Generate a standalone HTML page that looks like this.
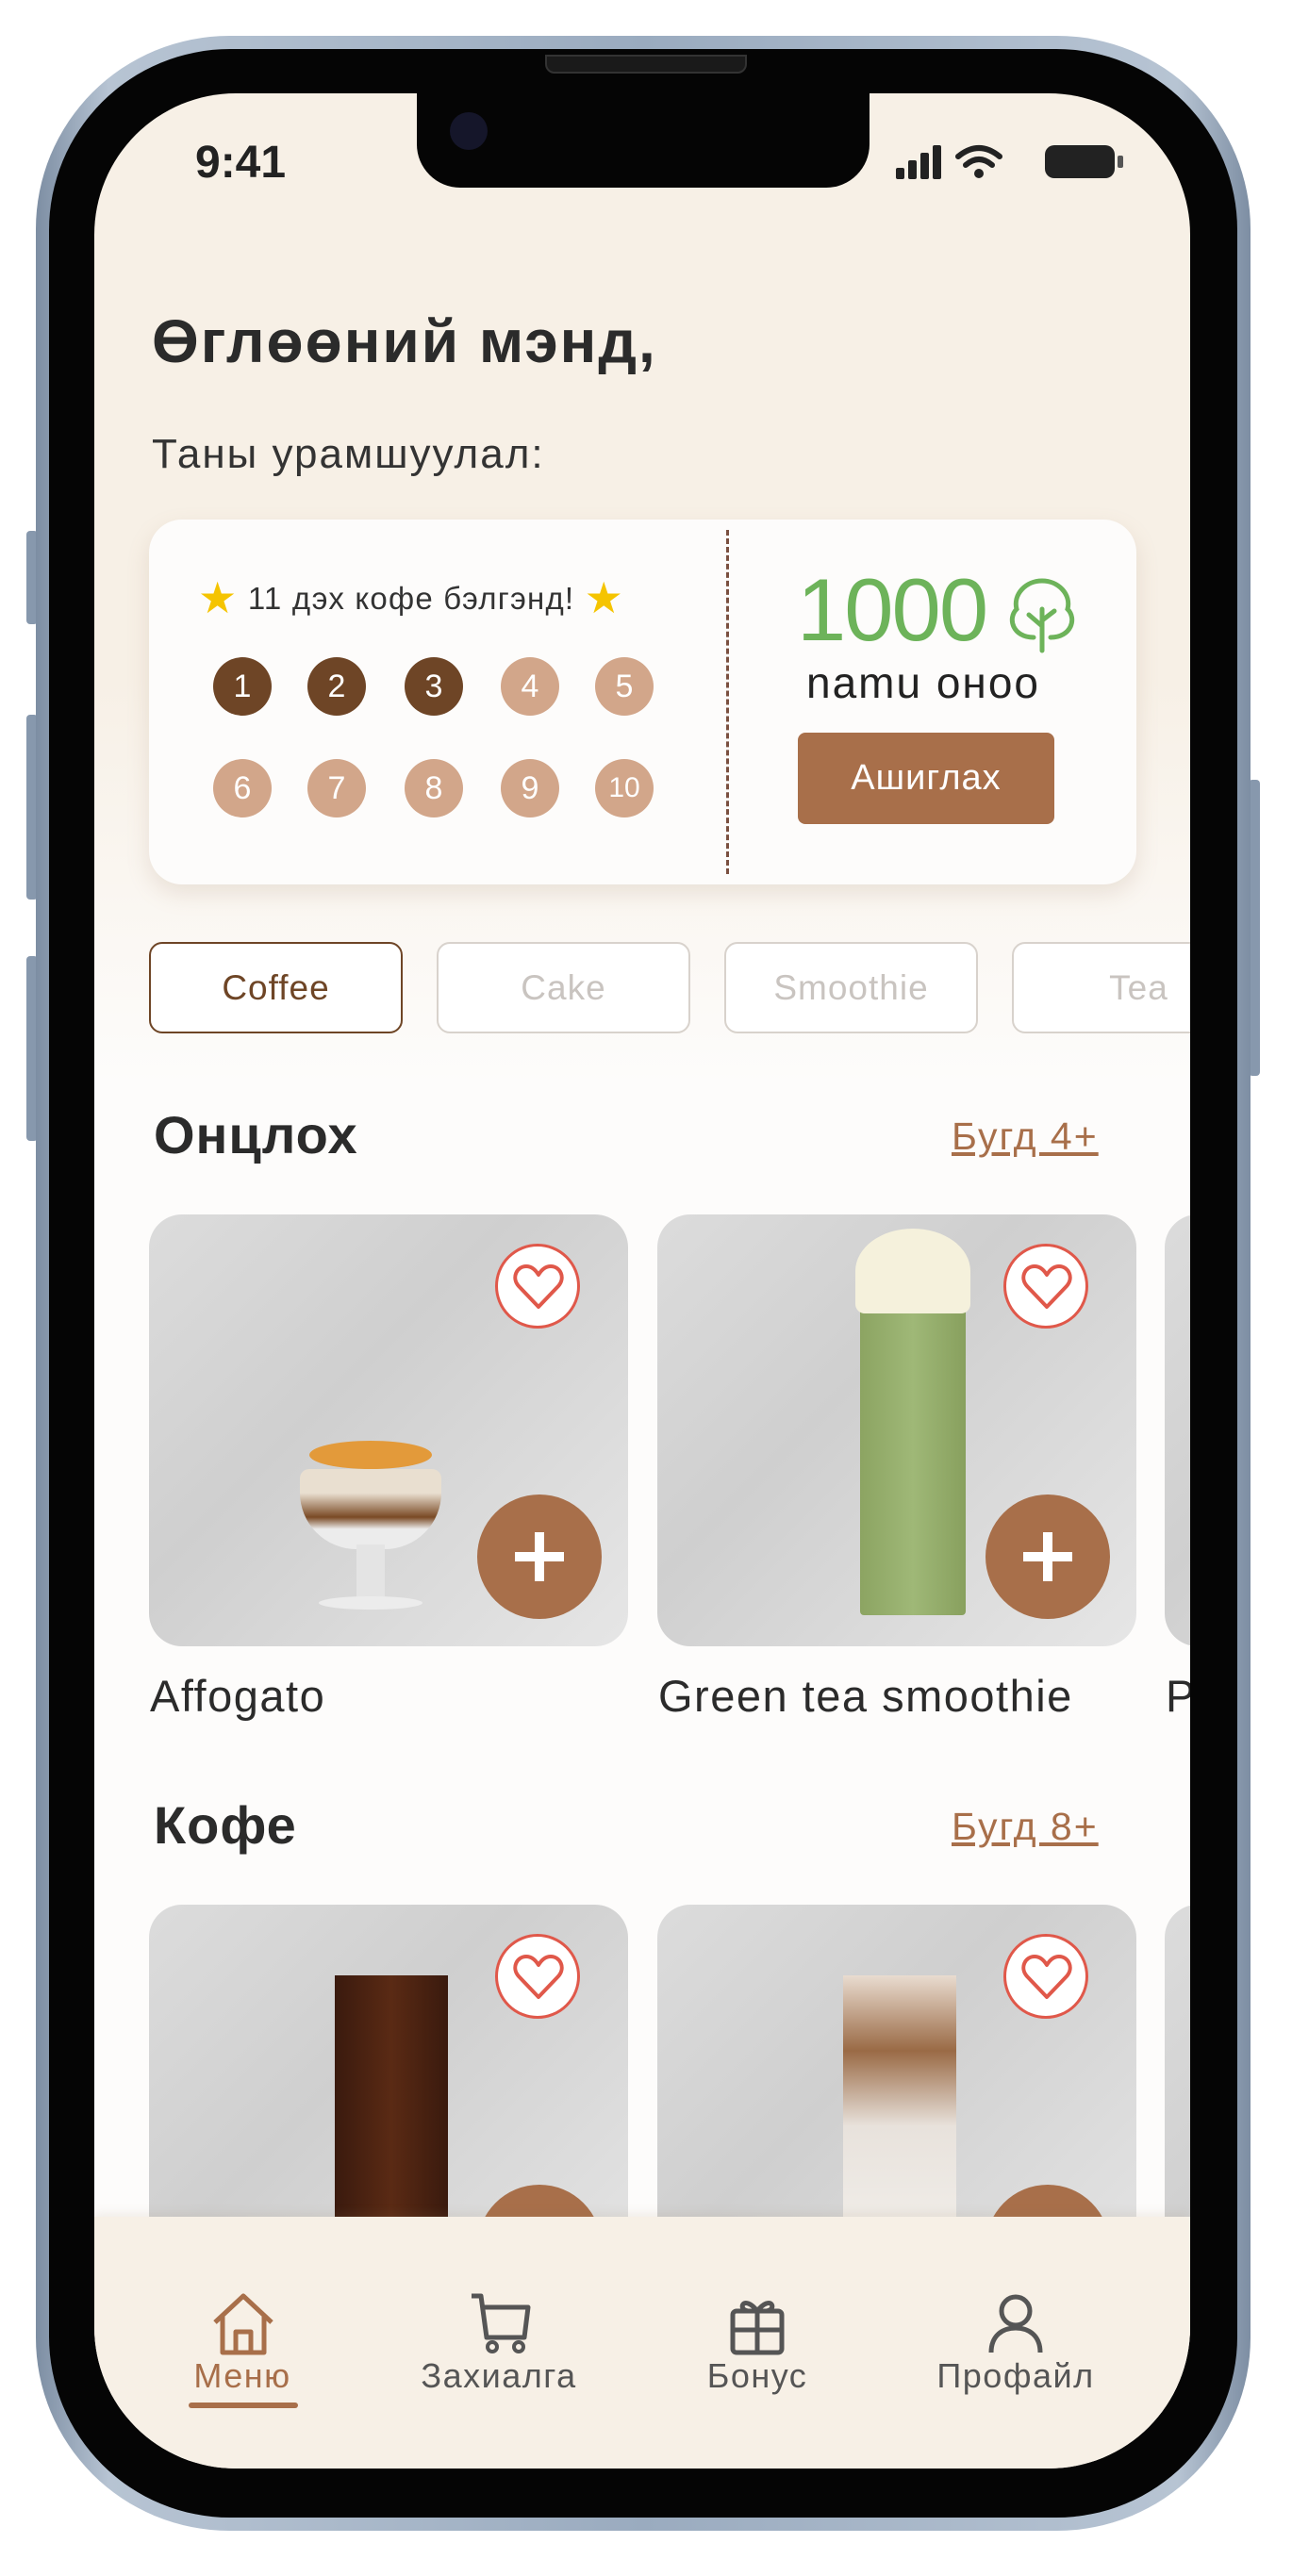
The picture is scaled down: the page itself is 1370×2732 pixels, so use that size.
<!DOCTYPE html>
<html><head><meta charset="utf-8">
<style>
*{margin:0;padding:0;box-sizing:border-box}
body{width:1370px;height:2732px;background:#fff;position:relative;overflow:hidden;font-family:"Liberation Sans","DejaVu Sans",sans-serif;color:#2a2a2a}
.a{position:absolute}
.frame{left:38px;top:38px;width:1288px;height:2646px;border-radius:205px;background:linear-gradient(90deg,#7d8ea3,#b7c4d3 6%,#9aabbf 50%,#b7c4d3 94%,#7d8ea3);}
.bezel{left:52px;top:52px;width:1260px;height:2618px;border-radius:192px;background:#050505}
.screen{left:100px;top:99px;width:1162px;height:2519px;border-radius:150px;overflow:hidden;background:linear-gradient(180deg,#f7f0e6 0,#f7f0e6 620px,#fdfcfb 1050px,#fdfcfb 100%)}
.btn{background:#8798ad;border-radius:4px}
.circ{width:62px;height:62px;border-radius:50%;color:#fff;font-size:34px;line-height:62px;text-align:center}
.d{background:#6e4526}.l{background:#d2a68a}
.tab{top:900px;height:97px;width:269px;border:2px solid #d8d2cc;border-radius:14px;background:#fff;text-align:center;line-height:93px;font-size:37px;color:#c9c4c0;letter-spacing:1px}
.card{width:508px;height:458px;border-radius:35px;background:linear-gradient(135deg,#dcdcdc,#cfcfcf 40%,#e6e6e6);overflow:hidden}
.heart{width:90px;height:90px;border-radius:50%;background:#fff;border:3px solid #e0584a}
.heart svg{position:absolute;left:16px;top:18px}
.plus{width:132px;height:132px;border-radius:50%;background:#a86f4a}
.plus:before,.plus:after{content:"";position:absolute;background:#fff;left:50%;top:50%;transform:translate(-50%,-50%)}
.plus:before{width:52px;height:10px}.plus:after{width:10px;height:52px}
.nav{font-size:36px;color:#555;text-align:center;width:260px;letter-spacing:1.5px}
.pname{font-size:47px;color:#2b2b2b;letter-spacing:1.5px;white-space:nowrap}
</style></head><body>
<div class="a btn" style="left:28px;top:563px;width:12px;height:99px"></div>
<div class="a btn" style="left:28px;top:758px;width:12px;height:196px"></div>
<div class="a btn" style="left:28px;top:1014px;width:12px;height:196px"></div>
<div class="a btn" style="left:1324px;top:827px;width:12px;height:314px"></div>
<div class="a frame"></div>
<div class="a bezel"></div>
<div class="a screen">
  <div class="a" style="left:342px;top:-10px;width:480px;height:110px;background:#050505;border-radius:0 0 46px 46px"></div>
  <div class="a" style="left:377px;top:20px;width:40px;height:40px;border-radius:50%;background:#15162a"></div>
  <div class="a" style="left:107px;top:46px;font-size:48px;font-weight:bold;color:#222">9:41</div>
  <svg class="a" style="left:850px;top:52px" width="250" height="42" viewBox="0 0 250 42">
    <rect x="0" y="27" width="9" height="12" rx="2" fill="#222"/><rect x="13" y="19" width="9" height="20" rx="2" fill="#222"/><rect x="26" y="11" width="9" height="28" rx="2" fill="#222"/><rect x="39" y="3" width="9" height="36" rx="2" fill="#222"/>
    <path d="M66 15 Q88 -3 110 15" stroke="#222" stroke-width="6" fill="none" stroke-linecap="round"/><path d="M74 24 Q88 12 102 24" stroke="#222" stroke-width="6" fill="none" stroke-linecap="round"/><circle cx="88" cy="33" r="5" fill="#222"/>
    <rect x="158" y="3" width="74" height="35" rx="10" fill="#222"/><rect x="235" y="14" width="6" height="13" rx="2" fill="#555"/>
  </svg>
  <div class="a" style="left:61px;top:226px;font-size:64px;font-weight:bold;color:#2b2b2b;letter-spacing:2px;white-space:nowrap">Өглөөний мэнд,</div>
  <div class="a" style="left:61px;top:358px;font-size:44px;color:#333;letter-spacing:2px;white-space:nowrap">Таны урамшуулал:</div>
  <div class="a" style="left:58px;top:452px;width:1047px;height:387px;background:#fdfcfb;border-radius:35px;box-shadow:0 10px 24px rgba(160,130,100,.18)"></div>
  <div class="a" style="left:670px;top:463px;height:365px;border-left:3px dashed #7a5040"></div>
  <div class="a" style="left:110px;top:508px;font-size:33px;color:#333;white-space:nowrap;letter-spacing:1.2px"><span style="color:#f5c400;font-size:46px;vertical-align:-4px">★</span> 11 дэх кофе бэлгэнд! <span style="color:#f5c400;font-size:46px;vertical-align:-4px">★</span></div>
  <div class="a circ d" style="left:126px;top:598px">1</div>
  <div class="a circ d" style="left:226px;top:598px">2</div>
  <div class="a circ d" style="left:329px;top:598px">3</div>
  <div class="a circ l" style="left:431px;top:598px">4</div>
  <div class="a circ l" style="left:531px;top:598px">5</div>
  <div class="a circ l" style="left:126px;top:706px">6</div>
  <div class="a circ l" style="left:226px;top:706px">7</div>
  <div class="a circ l" style="left:329px;top:706px">8</div>
  <div class="a circ l" style="left:431px;top:706px">9</div>
  <div class="a circ l" style="left:531px;top:706px;font-size:30px">10</div>
  <div class="a" style="left:745px;top:494px;font-size:94px;color:#6db35a;letter-spacing:-2px">1000</div>
  <svg class="a" style="left:966px;top:513px" width="78" height="82" viewBox="0 0 78 82"><path d="M39 78 V34 M39 52 L25 40 M39 46 L52 36 M30 64 C8 64 2 44 12 34 C8 18 22 4 39 4 C56 4 70 18 66 34 C76 44 70 64 48 64" stroke="#6db35a" stroke-width="5" fill="none" stroke-linecap="round"/></svg>
  <div class="a" style="left:755px;top:598px;font-size:46px;color:#222;letter-spacing:2px;white-space:nowrap">namu оноо</div>
  <div class="a" style="left:746px;top:678px;width:272px;height:97px;background:#a86f4a;border-radius:8px;color:#fff;font-size:38px;text-align:center;line-height:97px;letter-spacing:1px">Ашиглах</div>
  <div class="a tab" style="left:58px;border-color:#6e4526;color:#6e4526">Coffee</div>
  <div class="a tab" style="left:363px">Cake</div>
  <div class="a tab" style="left:668px">Smoothie</div>
  <div class="a tab" style="left:973px">Tea</div>
  <div class="a" style="left:63px;top:1072px;font-size:56px;font-weight:bold;color:#2b2b2b;letter-spacing:1px">Онцлох</div>
  <div class="a" style="left:909px;top:1083px;font-size:41px;color:#a86f4a;text-decoration:underline;letter-spacing:2px">Бугд 4+</div>
  <div class="a card" style="left:58px;top:1189px">
    <div class="a" style="left:170px;top:240px;width:130px;height:30px;border-radius:50%;background:#e39a3a"></div>
    <div class="a" style="left:160px;top:270px;width:150px;height:85px;border-radius:10px 10px 60px 60px;background:linear-gradient(#e9dfd0 30%,#7a4a25 60%,#ececec 75%)"></div>
    <div class="a" style="left:220px;top:350px;width:30px;height:60px;background:#e4e4e4"></div>
    <div class="a" style="left:180px;top:405px;width:110px;height:14px;border-radius:50%;background:#ececec"></div>
    <div class="a heart" style="left:367px;top:31px"><svg width="54" height="50" viewBox="0 0 54 50"><path d="M27 46 L6 24 C-2 15 4 3 14 3 C20 3 24 7 27 12 C30 7 34 3 40 3 C50 3 56 15 48 24 Z" stroke="#e0584a" stroke-width="4" fill="none" stroke-linejoin="round"/></svg></div>
    <div class="a plus" style="left:348px;top:297px"></div>
  </div>
  <div class="a card" style="left:597px;top:1189px">
    <div class="a" style="left:215px;top:90px;width:112px;height:335px;background:linear-gradient(90deg,#8ca462,#9fb877,#88a05e);border-radius:4px"></div>
    <div class="a" style="left:210px;top:15px;width:122px;height:90px;border-radius:50% 50% 10px 10px;background:#f5f1dc"></div>
    <div class="a heart" style="left:367px;top:31px"><svg width="54" height="50" viewBox="0 0 54 50"><path d="M27 46 L6 24 C-2 15 4 3 14 3 C20 3 24 7 27 12 C30 7 34 3 40 3 C50 3 56 15 48 24 Z" stroke="#e0584a" stroke-width="4" fill="none" stroke-linejoin="round"/></svg></div>
    <div class="a plus" style="left:348px;top:297px"></div>
  </div>
  <div class="a card" style="left:1135px;top:1189px"></div>
  <div class="a pname" style="left:59px;top:1672px">Affogato</div>
  <div class="a pname" style="left:598px;top:1672px">Green tea smoothie</div>
  <div class="a pname" style="left:1136px;top:1672px">P</div>
  <div class="a" style="left:63px;top:1804px;font-size:56px;font-weight:bold;color:#2b2b2b;letter-spacing:1px">Кофе</div>
  <div class="a" style="left:909px;top:1815px;font-size:41px;color:#a86f4a;text-decoration:underline;letter-spacing:2px">Бугд 8+</div>
  <div class="a card" style="left:58px;top:1921px">
    <div class="a" style="left:197px;top:75px;width:120px;height:320px;background:linear-gradient(90deg,#3a1a0e,#5a2a14,#3a1a0e)"></div>
    <div class="a heart" style="left:367px;top:31px"><svg width="54" height="50" viewBox="0 0 54 50"><path d="M27 46 L6 24 C-2 15 4 3 14 3 C20 3 24 7 27 12 C30 7 34 3 40 3 C50 3 56 15 48 24 Z" stroke="#e0584a" stroke-width="4" fill="none" stroke-linejoin="round"/></svg></div>
    <div class="a plus" style="left:348px;top:297px"></div>
  </div>
  <div class="a card" style="left:597px;top:1921px">
    <div class="a" style="left:197px;top:75px;width:120px;height:320px;background:linear-gradient(#e9dcd0,#9a6a45 25%,#e8e2dc 50%,#f4f2ee)"></div>
    <div class="a heart" style="left:367px;top:31px"><svg width="54" height="50" viewBox="0 0 54 50"><path d="M27 46 L6 24 C-2 15 4 3 14 3 C20 3 24 7 27 12 C30 7 34 3 40 3 C50 3 56 15 48 24 Z" stroke="#e0584a" stroke-width="4" fill="none" stroke-linejoin="round"/></svg></div>
    <div class="a plus" style="left:348px;top:297px"></div>
  </div>
  <div class="a card" style="left:1135px;top:1921px"></div>
  <div class="a" style="left:0;top:2252px;width:1162px;height:280px;background:#f7f0e6;box-shadow:0 -4px 10px rgba(150,120,90,.12)"></div>
  <svg class="a" style="left:122px;top:2330px" width="72" height="72" viewBox="0 0 72 72"><path d="M6 34 L36 6 L66 34 M14 28 V66 H58 V28 M28 66 V44 H44 V66" stroke="#a86f4a" stroke-width="5" fill="none" stroke-linejoin="round"/></svg>
  <svg class="a" style="left:394px;top:2330px" width="72" height="72" viewBox="0 0 72 72"><path d="M6 6 H16 L22 50 H62 L66 18 H18" stroke="#555" stroke-width="5" fill="none" stroke-linejoin="round"/><circle cx="28" cy="60" r="5" fill="none" stroke="#555" stroke-width="4"/><circle cx="56" cy="60" r="5" fill="none" stroke="#555" stroke-width="4"/></svg>
  <svg class="a" style="left:667px;top:2330px" width="72" height="72" viewBox="0 0 72 72"><rect x="10" y="22" width="52" height="44" rx="4" stroke="#555" stroke-width="5" fill="none"/><path d="M10 42 H62 M36 22 V66 M36 22 C22 4 14 20 26 22 M36 22 C50 4 58 20 46 22" stroke="#555" stroke-width="5" fill="none"/></svg>
  <svg class="a" style="left:941px;top:2330px" width="72" height="72" viewBox="0 0 72 72"><circle cx="36" cy="22" r="15" stroke="#555" stroke-width="5" fill="none"/><path d="M10 66 C10 48 22 40 36 40 C50 40 62 48 62 66" stroke="#555" stroke-width="5" fill="none"/></svg>
  <div class="a nav" style="left:27px;top:2400px;color:#a86f4a">Меню</div>
  <div class="a" style="left:100px;top:2449px;width:116px;height:6px;background:#a86f4a;border-radius:3px"></div>
  <div class="a nav" style="left:299px;top:2400px">Захиалга</div>
  <div class="a nav" style="left:573px;top:2400px">Бонус</div>
  <div class="a nav" style="left:847px;top:2400px">Профайл</div>
</div>
<div class="a" style="left:578px;top:58px;width:214px;height:20px;border-radius:0 0 10px 10px;background:#1a1a1a;border:2px solid #333"></div>
</body></html>
